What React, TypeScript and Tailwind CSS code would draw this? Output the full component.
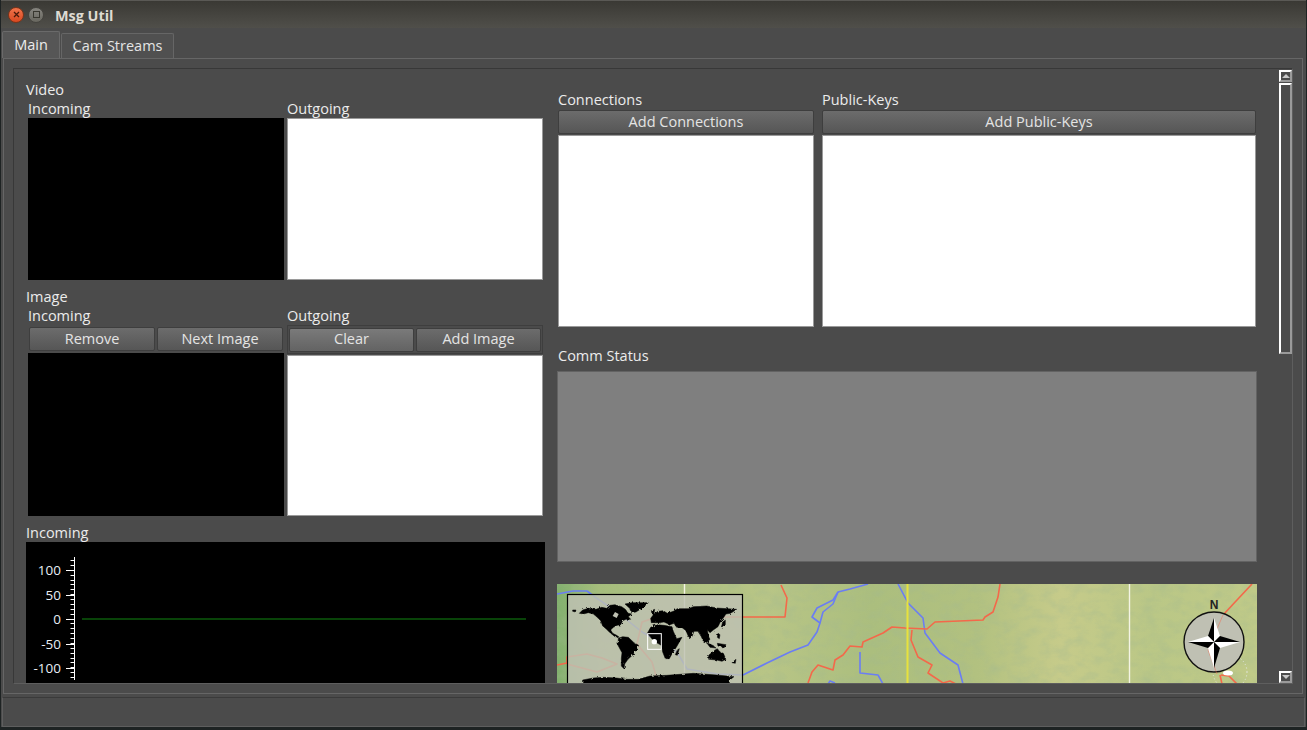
import React from "react";

const btn =
  "flex items-center justify-center h-[24px] pb-[1px] rounded-[2px] border border-[#3e3e3e] bg-gradient-to-b from-[#6c6c6c] to-[#565656] text-[#e4e4e4] text-[14.5px]";

function Label({ children, className = "" }: { children: React.ReactNode; className?: string }) {
  return <div className={"h-[17px] leading-[15px] text-[14.5px] text-[#ececec] whitespace-nowrap " + className}>{children}</div>;
}

function Plot() {
  const majors = [
    [570, "100"],
    [594.5, "50"],
    [619, "0"],
    [643.5, "-50"],
    [667.5, "-100"],
  ] as const;
  const ticks: number[] = [];
  for (let y = 560; y < 680; y += 4.88) ticks.push(y);
  return (
    <svg width="519" height="142" viewBox="26 542 519 142" className="block">
      <rect x="26" y="542" width="519" height="142" fill="#000" />
      <line x1="74.5" y1="557" x2="74.5" y2="680" stroke="#fff" strokeWidth="1" />
      {ticks.map((y) => (
        <line key={y} x1="70.5" x2="74" y1={Math.round(y) + 0.5} y2={Math.round(y) + 0.5} stroke="#fff" />
      ))}
      {majors.map(([y, t]) => (
        <g key={t}>
          <line x1="66" x2="74" y1={Math.round(y) + 0.5} y2={Math.round(y) + 0.5} stroke="#fff" />
          <text x="61" y={y + 5} textAnchor="end" fill="#e8eef4" fontSize="13.5" fontFamily="'Open Sans', sans-serif">
            {t}
          </text>
        </g>
      ))}
      <line x1="82" x2="526" y1="619" y2="619" stroke="#0b5a0b" strokeWidth="1.6" />
    </svg>
  );
}

function Lines() {
  const red = "#f4684a";
  const blue = "#6a7df4";
  const s = { fill: "none", strokeWidth: 1.6, strokeLinejoin: "round" as const };
  return (
    <g>
      <polyline {...s} stroke={blue} points="186,91 210,79 233,68 251,61 260,48 263,39 255,33 260,24 276,16 281,8 293,5 311,0" />
      <polyline {...s} stroke={blue} points="263,39 266,28 276,20 281,8" />
      <polyline {...s} stroke={blue} points="341,0 351,19 366,34 368,49 383,69 401,81 406,100" />
      <polyline {...s} stroke={blue} points="303,68 303,89 321,91 326,100" />
      <polyline {...s} stroke={blue} points="271,100 273,97 278,99" />
      <polyline {...s} stroke={blue} points="0,10 16,7 30,7 38,13 60,28 85,48 120,68 130,85 160,90 186,91" />
      <polyline {...s} stroke={red} points="100,33 186,33 228,33 230,14 224,1" />
      <polyline {...s} stroke={red} points="251,99 255,88 261,81 276,86 278,76 286,71 293,62 305,63 306,58 326,49 335,43 348,44 370,45 378,38 426,36 428,33 436,28 441,13 443,0" />
      <polyline {...s} stroke={red} points="355,46 354,56 361,73 375,81 371,89 386,99 393,97 399,100" />
      <polyline {...s} stroke={red} points="695,0 666,31" />
      <polyline {...s} stroke={red} points="663,91 665,100" />
      <polyline {...s} stroke={red} points="664,91 672,92 680,100" />
      <polyline {...s} stroke={red} points="0,81 10,79 10,73 30,70 45,74 60,80 40,88 10,80" />
      <polyline {...s} stroke={red} points="100,33 85,38 80,60 95,78 100,95" />
    </g>
  );
}

function MapView() {
  return (
    <svg width="700" height="100" viewBox="0 0 700 100" className="block">
      <defs>
        <linearGradient id="terrain" x1="0" y1="0" x2="1" y2="0">
          <stop offset="0" stopColor="#82b06e" />
          <stop offset="0.06" stopColor="#a6bd7c" />
          <stop offset="0.3" stopColor="#b8c586" />
          <stop offset="0.45" stopColor="#abbe7e" />
          <stop offset="0.6" stopColor="#b2c180" />
          <stop offset="0.72" stopColor="#c6cb8a" />
          <stop offset="0.85" stopColor="#bac786" />
          <stop offset="1" stopColor="#c0ca88" />
        </linearGradient>
        <filter id="rough" x="0" y="0" width="100%" height="100%">
          <feTurbulence type="fractalNoise" baseFrequency="0.07 0.11" numOctaves="4" seed="11" />
          <feColorMatrix values="0 0 0 0 0.36  0 0 0 0 0.48  0 0 0 0 0.28  0 0 0 1.6 -0.62" />
        </filter>
        <filter id="jag" x="-5%" y="-5%" width="110%" height="110%">
          <feTurbulence type="fractalNoise" baseFrequency="0.12" numOctaves="2" seed="3" />
          <feDisplacementMap in="SourceGraphic" scale="9" />
        </filter>
      </defs>
      <rect width="700" height="100" fill="url(#terrain)" />
      <rect width="700" height="100" filter="url(#rough)" opacity="0.45" />
      <Lines />
      <line x1="350.5" x2="350.5" y1="0" y2="100" stroke="#e8e23c" strokeWidth="2" />
      <line x1="572.5" x2="572.5" y1="0" y2="100" stroke="#f4f4e4" strokeWidth="1.4" />
      <line x1="127.5" x2="127.5" y1="0" y2="100" stroke="#f4f4e4" strokeWidth="1.4" />

      {/* overview */}
      <rect x="10.5" y="10.5" width="175" height="92" fill="#bfc1b3" fillOpacity="0.84" stroke="#000" strokeWidth="1.2" />
      <g transform="translate(3 6) scale(0.3333)" fill="#000" stroke="#000" strokeWidth="1.5" strokeLinejoin="miter" filter="url(#jag)">
        {/* North America */}
        <polygon points="58,70 68,60 85,55 108,58 125,52 140,55 150,46 165,44 185,50 196,58 205,70 215,72 205,80 212,88 198,88 188,92 182,104 172,106 160,112 152,120 158,130 170,136 178,142 165,140 150,128 138,116 128,108 122,92 112,82 100,72 85,68 70,72" />
        <polygon points="195,42 215,38 265,38 250,52 228,66 215,68 208,54" />
        <polygon points="38,60 48,60 46,66 38,64" />
        {/* South America */}
        <polygon points="175,145 188,140 205,142 222,158 236,166 228,180 218,195 204,208 194,222 192,236 184,228 184,205 186,188 174,166" />
        {/* Eurasia */}
        <polygon points="272,85 282,72 294,64 310,62 322,70 340,64 352,56 385,56 400,50 440,48 470,54 530,58 512,70 498,72 490,84 482,94 474,110 460,120 450,128 442,120 446,140 450,148 442,156 432,158 424,140 414,124 402,124 396,140 388,146 378,122 365,112 350,112 342,100 330,104 312,96 298,98 286,98 274,98" />
        {/* Africa */}
        <polygon points="262,130 272,112 290,104 312,106 336,110 340,124 350,146 366,142 350,170 338,188 328,206 316,206 308,186 304,166 282,154" />
        <polygon points="352,180 358,176 352,196 346,194" />
        {/* Islands */}
        <polygon points="446,196 462,182 472,176 480,186 490,190 498,208 486,214 470,210 446,208" />
        <polygon points="440,158 458,166 468,174 450,172" />
        <polygon points="472,160 498,164 494,172 474,168" />
        <polygon points="488,96 496,90 496,104 484,112" />
        <polygon points="474,130 480,134 478,146 472,142" />
        <polygon points="274,62 284,58 282,72 276,72" />
        <polygon points="516,218 528,208 526,220" />
        {/* Antarctica */}
        <polygon points="68,270 100,264 130,262 170,264 200,268 235,268 270,258 320,256 400,250 470,255 522,260 505,274 520,290 66,290" />
      </g>
      <g transform="translate(3 6) scale(0.3333)">
        <polygon points="165,66 176,72 170,84 158,78" fill="#bfc1b3" />
        <rect x="263" y="131" width="41" height="47" fill="none" stroke="#fff" strokeWidth="3" />
        <circle cx="283" cy="155" r="8" fill="#fff" />
      </g>

      {/* compass */}
      <ellipse cx="671" cy="89" rx="5" ry="2.5" fill="#fff" />
      <circle cx="673" cy="88" r="17" fill="none" stroke="#e8ecec" strokeDasharray="1 2.5" strokeWidth="1" />
      <circle cx="657" cy="58" r="30" fill="#bfc0b3" stroke="#111" strokeWidth="1.4" />
      <polyline points="666,31 651,66 660,90" fill="none" stroke="#f0694e" strokeWidth="0.8" opacity="0.6" />
      <text x="657" y="25" textAnchor="middle" fontSize="12" fontWeight="700" fill="#222" fontFamily="'Liberation Sans', sans-serif">
        N
      </text>
      <g>
        <polygon points="657,34 651,52 657,58" fill="#000" />
        <polygon points="657,34 663,52 657,58" fill="#fff" />
        <polygon points="683,58 663,52 657,58" fill="#000" />
        <polygon points="683,58 663,64 657,58" fill="#fff" />
        <polygon points="657,84 663,64 657,58" fill="#000" />
        <polygon points="657,84 651,64 657,58" fill="#fff" />
        <polygon points="631,58 651,64 657,58" fill="#000" />
        <polygon points="631,58 651,52 657,58" fill="#fff" />
      </g>
    </svg>
  );
}

export default function App() {
  return (
    <div className="w-[1307px] h-[730px] overflow-hidden flex flex-col bg-[#4b4b4b] font-['Open_Sans',sans-serif] border-b-[3px] border-x border-[#1e2323]">
      {/* Title bar */}
      <div className="h-[28px] shrink-0 flex items-center bg-gradient-to-b from-[#3a3934] to-[#504f4a] border-t border-[#5a5955]">
        <div className="ml-[7px] w-[16px] h-[16px] rounded-full bg-gradient-to-b from-[#f0734a] to-[#d9481f] border border-[#7c3318] flex items-center justify-center">
          <svg width="7" height="7" viewBox="0 0 7 7">
            <path d="M1 1L6 6M6 1L1 6" stroke="#4a1a0a" strokeWidth="1.3" />
          </svg>
        </div>
        <div className="ml-[4px] w-[16px] h-[16px] rounded-full bg-gradient-to-b from-[#86857f] to-[#68675f] border border-[#44433e] flex items-center justify-center">
          <div className="w-[7px] h-[7px] border border-[#38372f]" />
        </div>
        <div className="ml-[11px] pt-[2px] text-[14.4px] font-bold text-[#dedbd2]">Msg Util</div>
      </div>

      {/* Tabs */}
      <div className="h-[30px] shrink-0 flex items-end pl-[1px] gap-[1px]">
        <div className="w-[58px] h-[27px] pb-[1px] flex items-center justify-center rounded-t-[2px] border border-b-0 border-[#6a6a6a] bg-[#565656] text-[14.5px] text-[#ececec]">
          Main
        </div>
        <div className="w-[113px] h-[25px] flex items-center justify-center rounded-t-[2px] border border-b-0 border-[#666666] bg-[#505050] text-[14.5px] text-[#e4e4e4]">
          Cam Streams
        </div>
      </div>

      {/* Pane */}
      <div className="h-[636px] shrink-0 ml-[2px] mr-[3px] border border-[#666666] p-[9px]">
        <div className="h-[616px] border border-[#383838] border-r-[#5e5e5e] border-b-[#5e5e5e] flex overflow-hidden">
          <div className="w-[1243px] shrink-0 flex overflow-hidden pl-[12px] gap-[12px]">
            {/* Left */}
            <div className="w-[519px] shrink-0 pt-[12px]">
              <div className="h-[17px] leading-[18px] text-[14.5px] text-[#ececec]">Video</div>
              <div className="flex pl-[2px] gap-[3px] mt-[3px]">
                <div className="w-[256px]">
                  <Label>Incoming</Label>
                  <div className="h-[162px] bg-black" />
                </div>
                <div className="w-[256px]">
                  <Label>Outgoing</Label>
                  <div className="h-[162px] bg-white border border-[#9a9a9a]" />
                </div>
              </div>
              <div className="mt-[8px] h-[17px] leading-[18px] text-[14.5px] text-[#ececec]">Image</div>
              <div className="flex pl-[2px] gap-[3px] mt-[3px]">
                <div className="w-[256px]">
                  <Label>Incoming</Label>
                  <div className="flex gap-[2px] pl-[1px] mt-[2px]">
                    <div className={btn + " w-[126px]"}>Remove</div>
                    <div className={btn + " w-[126px]"}>Next Image</div>
                  </div>
                  <div className="h-[163px] bg-black mt-[2px]" />
                </div>
                <div className="w-[256px]">
                  <Label>Outgoing</Label>
                  <div className="h-[29px] border border-[#3e3e3e] flex items-center gap-[2px] px-[1px]">
                    <div className={btn + " w-[125px] from-[#7a7a7a] to-[#636363]"}>Clear</div>
                    <div className={btn + " w-[125px]"}>Add Image</div>
                  </div>
                  <div className="h-[161px] bg-white border border-[#9a9a9a] mt-[1px]" />
                </div>
              </div>
              <Label className="mt-[9px]">Incoming</Label>
              <Plot />
            </div>

            {/* Right */}
            <div className="w-[700px] shrink-0 pt-[22px]">
              <div className="flex gap-[8px] pl-[1px]">
                <div className="w-[256px]">
                  <div className="h-[19px] leading-[18px] text-[14.5px] text-[#ececec]">Connections</div>
                  <div className={btn}>Add Connections</div>
                  <div className="h-[192px] bg-white border border-[#9a9a9a] mt-[1px]" />
                </div>
                <div className="w-[434px]">
                  <div className="h-[19px] leading-[18px] text-[14.5px] text-[#ececec]">Public-Keys</div>
                  <div className={btn}>Add Public-Keys</div>
                  <div className="h-[192px] bg-white border border-[#9a9a9a] mt-[1px]" />
                </div>
              </div>
              <div className="mt-[19px] h-[19px] leading-[20px] pl-[1px] text-[14.5px] text-[#ececec]">Comm Status</div>
              <div className="mt-[6px] h-[191px] bg-[#7f7f7f] border border-[#636363]" />
              <div className="mt-[22px]">
                <MapView />
              </div>
            </div>
          </div>

          {/* Scrollbar */}
          <div className="ml-[22px] w-[13px] shrink-0 flex flex-col pt-[1px] pb-[0px]">
            <div className="h-[12px] border-[2px] border-t-white border-l-white border-r-[#9a9a9a] border-b-[#9a9a9a] flex items-center justify-center">
              <div className="w-0 h-0 border-x-[4px] border-x-transparent border-b-[4px] border-b-[#c8c8c8]" />
            </div>
            <div className="mt-[1px] h-[271px] border-[2px] border-t-white border-l-white border-r-[#9a9a9a] border-b-[#9a9a9a]" />
            <div className="flex-1" />
            <div className="h-[12px] border-[2px] border-t-white border-l-white border-r-[#9a9a9a] border-b-[#9a9a9a] flex items-center justify-center">
              <div className="w-0 h-0 border-x-[4px] border-x-transparent border-t-[4px] border-t-[#c8c8c8]" />
            </div>
          </div>
        </div>
      </div>

      {/* Status */}
      <div className="mt-[3px] mx-[1px] flex-1 border border-[#5e5e5e] border-t-[#3a3a3a]" />
    </div>
  );
}
